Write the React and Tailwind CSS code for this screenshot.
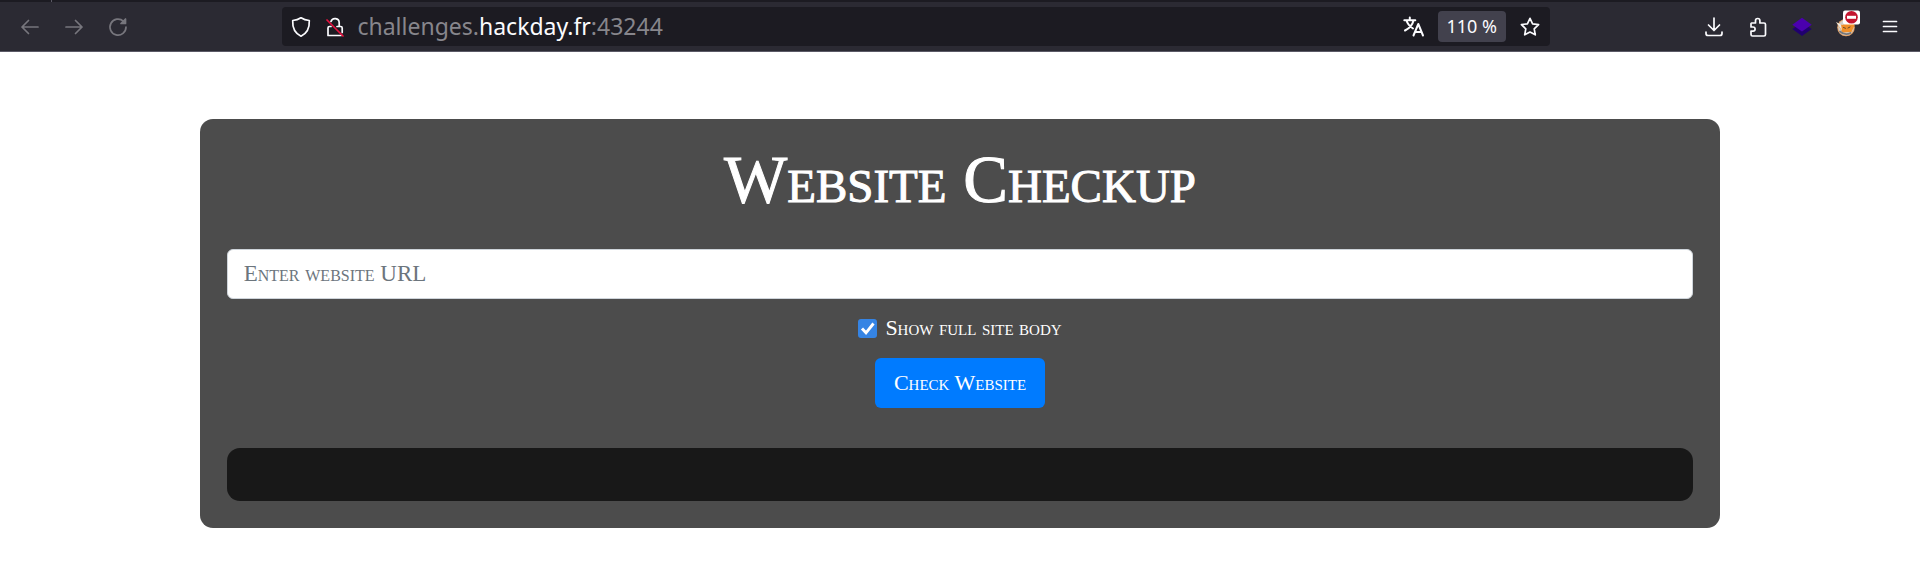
import React from "react";

const line = {
  fill: "none",
  stroke: "currentColor",
  strokeWidth: 1.7,
  strokeLinecap: "round",
  strokeLinejoin: "round",
};

function Icon({ children, ...rest }) {
  return (
    <svg viewBox="0 0 20 20" className="size-5 overflow-visible" aria-hidden="true" {...line} {...rest}>
      {children}
    </svg>
  );
}

function ToolButton({ label, children, disabled }) {
  return (
    <button
      type="button"
      aria-label={label}
      disabled={disabled}
      className="flex size-9 shrink-0 items-center justify-center rounded text-[#fbfbfe] disabled:text-[#77767d]"
    >
      {children}
    </button>
  );
}

function Toolbar() {
  return (
    <header>
      <div className="flex h-0.5 bg-[#1c1b22] pl-[51px]">
        <span className="w-px bg-[#5b5a66]" />
      </div>
      <div className="flex h-[50px] items-center border-b border-b-[#5b5a66] bg-[#2b2a33]">
        <nav className="flex flex-[280] items-center gap-2 pl-3">
          <ToolButton label="Back" disabled>
            <Icon><path d="M18 10H2M8.500 3.500L2 10l6.500 6.500" /></Icon>
          </ToolButton>
          <ToolButton label="Forward" disabled>
            <Icon><path d="M2 10h16M11.500 3.500L18 10l-6.500 6.500" /></Icon>
          </ToolButton>
          <ToolButton label="Reload" disabled>
            <Icon>
              <path d="M15.500 4.300A8 8 0 1 0 18 10" />
              <path d="M17.500 2v4.500H13z" fill="currentColor" />
            </Icon>
          </ToolButton>
        </nav>
        <div className="flex h-[39px] w-[66%] items-center rounded bg-[#1c1b22] pr-0.5 pl-[9px] text-[#fbfbfe]">
          <Icon><path d="M10 .8c2.500 1.700 5.200 2.500 8.300 2.700 .3 6.200-1.600 12.500-8.300 15.700C3.300 16 1.400 9.700 1.700 3.500 4.800 3.300 7.500 2.500 10 .8z" /></Icon>
          <span className="ml-3.5 flex">
            <Icon>
              <path d="M6 4.500a4.200 4.200 0 0 1 8.200 1.300V9M6 9.500H4.500A1.500 1.500 0 0 0 3 11v7.500h13M17.200 15.500V11a1.500 1.500 0 0 0-1.500-1.500H12" />
              <path d="M2 3l16 16" stroke="#e8113f" />
            </Icon>
          </span>
          <p className="ml-3 flex-1 pb-0.5 font-['Noto_Sans',sans-serif] text-[23px] leading-8 text-[#87868c]">
            challenges.<span className="text-[#fbfbfe]">hackday.fr</span>:43244
          </p>
          <ToolButton label="Translate">
            <Icon strokeWidth="2">
              <path d="M.3 3.200h11M5.800.5v2.700M9.500 3.500C8.500 8 5 11.500 1 13.500M2.500 3.500c1 3.500 3.500 6 6.500 8" />
              <path d="M9.500 18.500L14.300 7l4.700 11.500M11 15h6.500" />
            </Icon>
          </ToolButton>
          <button type="button" className="mx-1.5 h-[31px] w-17 rounded bg-[#42414d] text-center font-['Noto_Sans',sans-serif] text-[18px] leading-[31px] text-[#fbfbfe]">
            110 %
          </button>
          <ToolButton label="Bookmark">
            <Icon><path d="M10 1.300l2.600 5.500 6 .8-4.400 4.200 1.100 6L10 15l-5.300 2.800 1.100-6L1.400 7.600l6-.8z" /></Icon>
          </ToolButton>
        </div>
        <div className="flex flex-[371] items-center justify-end gap-2 pr-3">
          <ToolButton label="Downloads">
            <Icon><path d="M10 1v12M4.500 8l5.500 5.500L15.500 8M2 15v1.500A2 2 0 0 0 4 18.500h12a2 2 0 0 0 2-2V15" /></Icon>
          </ToolButton>
          <ToolButton label="Extensions">
            <Icon><path d="M3.500 6H7.500V3.700a2.200 2.200 0 0 1 4.400 0V6H16a1.500 1.500 0 0 1 1.500 1.500V17.500A1.500 1.500 0 0 1 16 19H4.500A1.500 1.500 0 0 1 3 17.500V14.200h2a2.100 2.100 0 0 0 0-4.200H3V6.500z" /></Icon>
          </ToolButton>
          <ToolButton label="Layers">
            <Icon stroke="none">
              <path d="M.3 12L10 5.500l9.700 6.500L10 19z" fill="#20006f" />
              <path d="M.3 7.800L10 .8l9.700 7L10 14.600z" fill="#4a00ae" />
            </Icon>
          </ToolButton>
          <ToolButton label="Proxy">
            <Icon stroke="none">
              <circle cx="10" cy="10.500" r="8.800" fill="#e2a36a" />
              <circle cx="10" cy="10.500" r="7.800" fill="#d4d0cb" />
              <path d="M.5 5.500L6 8l11-3 1.500 3.500L15.500 15l-9 .5z" fill="#f08f2a" />
              <path d="M0 5l5 2.500 1 6z" fill="#eceae6" />
              <path d="M7.500 10.500l2 .8M12 11l2-1" stroke="#6b4a2c" strokeWidth="1" />
              <path d="M4 14.500q5 4.500 10.500 1.500" stroke="#77777a" />
              <rect x="7" y="-6.500" width="17" height="14" rx="2" fill="#fff" />
              <circle cx="15.500" cy=".3" r="6.300" fill="#c3152f" />
              <rect x="11" y="-1.200" width="9" height="3" fill="#fff" />
            </Icon>
          </ToolButton>
          <ToolButton label="Menu">
            <Icon><path d="M3.500 4.500h13M3.500 9.500h13M3.500 14.500h13" /></Icon>
          </ToolButton>
        </div>
      </div>
    </header>
  );
}

export default function App() {
  return (
    <div className="bg-white">
      <Toolbar />
      <main className="mx-auto mt-[67px] w-[79.2%] rounded-[13px] bg-[#4c4c4c] p-[27px] font-['Liberation_Serif',serif] text-white [font-variant:small-caps]">
        <h1 className="text-center text-[67px] leading-[66px] font-medium [-webkit-text-stroke:1px_white]">Website Checkup</h1>
        <form className="mt-[37px] flex flex-col items-center" onSubmit={(e) => e.preventDefault()}>
          <input
            type="text"
            aria-label="Website URL"
            placeholder="Enter website URL"
            className="h-[50px] w-full rounded-md border border-[#ced4da] bg-white px-4 text-[23px] text-gray-800 [font-variant:small-caps] placeholder:text-[#6c757d]"
          />
          <label className="mt-[15px] flex h-7 items-center gap-2 text-[22px] leading-7">
            <span className="grid size-[19px] place-items-center">
              <input type="checkbox" defaultChecked className="peer col-start-1 row-start-1 size-[19px] appearance-none rounded-[3px] bg-white checked:bg-[#3584e4]" />
              <svg viewBox="0 0 19 19" className="pointer-events-none col-start-1 row-start-1 hidden size-[19px] peer-checked:block" aria-hidden="true">
                <path d="M4 9.500l4 4.300L15.500 4.500" fill="none" stroke="#fff" strokeWidth="2.900" />
              </svg>
            </span>
            Show full site body
          </label>
          <button type="submit" className="mt-4 h-[50px] rounded-md bg-[#007bff] px-[19px] pb-0.5 text-[22px] [font-variant:small-caps]">
            Check Website
          </button>
        </form>
        <output className="mt-10 block h-[53px] rounded-[13px] bg-[#181818]" />
      </main>
    </div>
  );
}
